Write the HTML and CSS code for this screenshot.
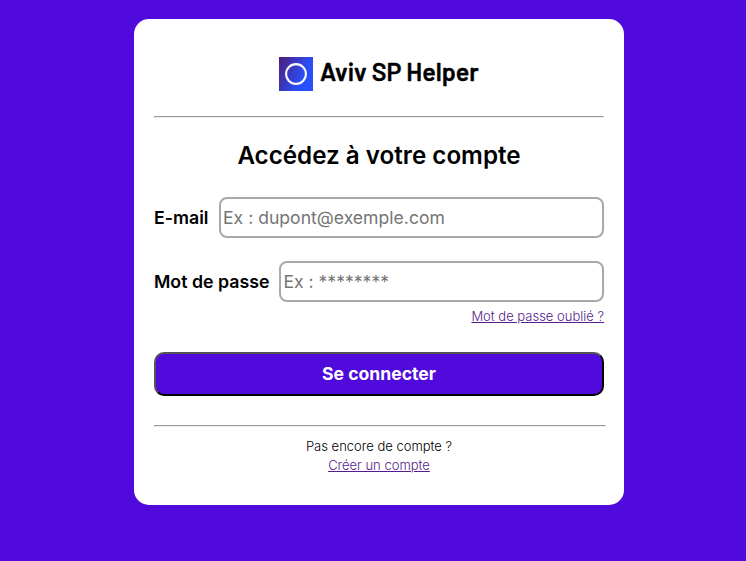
FILE: index.html
```html
<!DOCTYPE html>
<html lang="fr">
<head>
<meta charset="utf-8">
<title>Aviv SP Helper</title>
<link rel="stylesheet" href="styles.css">
</head>
<body>
<main class="card">
  <header class="brand">
    <svg class="logo" viewBox="0 0 34 34"><defs><linearGradient id="g" x1="0" y1="0" x2="1" y2="0.5"><stop offset="0" stop-color="#501c78"/><stop offset="0.75" stop-color="#2a4cf0"/><stop offset="1" stop-color="#2850ff"/></linearGradient></defs><rect width="34" height="34" fill="url(#g)"/><circle cx="17" cy="17" r="9.9" fill="none" stroke="#f8f8fc" stroke-width="2.1"/></svg>
    <span class="brand-name">Aviv SP Helper</span>
  </header>
  <hr class="rule">
  <h1 class="title">Accédez à votre compte</h1>
  <form class="form">
    <div class="field"><label for="email">E-mail</label><input id="email" type="text" placeholder="Ex : dupont@exemple.com"></div>
    <div class="field"><label for="password">Mot de passe</label><input id="password" type="password" placeholder="Ex : ********"></div>
    <a class="forgot" href="#">Mot de passe oublié ?</a>
    <button class="submit" type="button">Se connecter</button>
  </form>
  <hr class="rule rule-bottom">
  <footer class="signup"><span>Pas encore de compte ?</span><a href="#">Créer un compte</a></footer>
</main>
</body>
</html>
```
FILE: styles.css
```css
* { box-sizing: border-box; }
body { margin: 0; padding-top: 19px; background: #500adc; font-family: Inter, sans-serif; color: #000; }
.card { width: 490px; height: 486px; margin-left: 134px; padding: 38px 20px 0; background: #fff; border-radius: 15px; }
.brand { display: flex; justify-content: center; gap: 7px; height: 34px; }
.logo { width: 34px; height: 34px; }
.brand-name { width: 159px; font: 600 25px/28px Barlow, Roboto, sans-serif; white-space: nowrap; -webkit-text-stroke: 0.4px #000; }
.rule { height: 2px; margin: 25px 0 0; border: 1px solid; border-color: #9a9a9a #eee #eee #9a9a9a; }
.title { margin: 23px 0 0; font-size: 24.2px; font-weight: 600; line-height: 30px; text-align: center; }
.form { display: flex; flex-direction: column; margin-top: 26px; }
.field { display: flex; align-items: center; gap: 10px; height: 41px; margin-bottom: 23px; font-size: 17.75px; font-weight: 600; }
.field label { min-width: 55px; }
.field input { flex: 1; min-width: 0; height: 41px; padding: 1px 2px; border: 2px solid #a9a9a9; border-radius: 8px; font: 400 17.6px Inter, sans-serif; }
.forgot { align-self: flex-end; margin-top: -18px; font-size: 13px; font-weight: 300; line-height: 18px; }
a { color: #551a8b; }
.submit { height: 44px; margin-top: 27px; padding: 0 0 2px; border: 2px outset #000; border-radius: 10px; background: #500adc; color: #fff; font: 700 17.6px Inter, sans-serif; }
.rule-bottom { width: 452px; margin-top: 29px; }
.signup { display: flex; flex-direction: column; align-items: center; margin-top: 10px; font-size: 13px; font-weight: 300; line-height: 19px; }
```
